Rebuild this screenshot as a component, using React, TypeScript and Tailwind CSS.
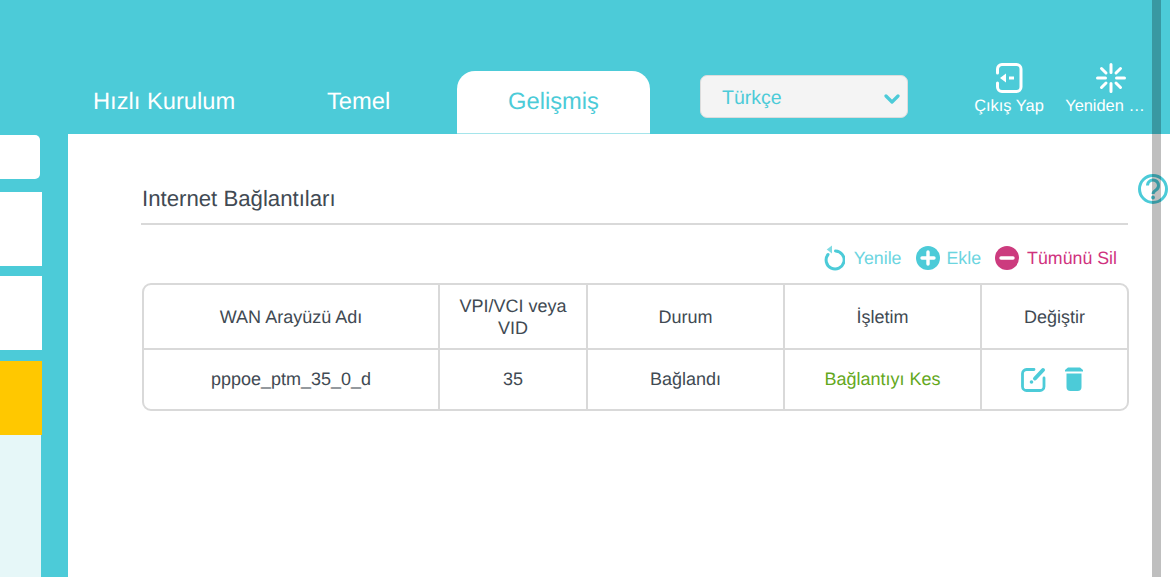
export default function App() {
  return (
    <div className="relative w-[1170px] h-[577px] overflow-hidden bg-white flex flex-col font-['Liberation_Sans',Arial,sans-serif] [text-rendering:geometricPrecision]">
      <header className="h-[134px] shrink-0 bg-[#4ccbd8] flex items-end">
        <nav className="flex items-end w-[650px] h-[63px] text-[23.7px] text-white">
          <div className="w-[327px] h-[62px] flex items-center pl-[93px] pb-[1px]">Hızlı Kurulum</div>
          <div className="w-[130px] h-[62px] flex items-center pb-[1px]">Temel</div>
          <div className="w-[193px] h-[63px] bg-white rounded-t-[18px] text-[#4ccbd8] flex items-center justify-center border-b border-[#a5e5eb] pt-[2px]">Gelişmiş</div>
        </nav>
        <div className="self-start mt-[75px] ml-[50px] w-[208px] h-[43px] rounded-[7px] bg-[#f4f4f4] border border-[#dcdcdc] flex items-center justify-between pl-[21px] pr-[7px] pt-[5px] text-[19.5px] text-[#4ccbd8]">
          <span className="-mt-[1px]">Türkçe</span>
          <svg width="16" height="11" viewBox="0 0 16 11" fill="none" stroke="#4ccbd8" strokeWidth="3.2" strokeLinecap="round" strokeLinejoin="round"><path d="M2 2l6 6 6-6" /></svg>
        </div>
        <div className="self-start mt-[63px] ml-[66px] w-[70px] flex flex-col items-center text-white text-[16.4px] leading-[18px]">
          <svg width="28" height="30" viewBox="0 0 28 30" fill="none" className="mb-[4px]">
            <path d="M2.500 10V6a4.500 4.500 0 0 1 4.500-4.500h14.500a4.500 4.500 0 0 1 4.500 4.500v18a4.500 4.500 0 0 1-4.500 4.500H7a4.500 4.500 0 0 1-4.500-4.500v-4" stroke="#fff" strokeWidth="3" strokeLinecap="round" />
            <path d="M5 15l6-4.500v9z" fill="#fff" />
            <path d="M14 15h5" stroke="#fff" strokeWidth="3" />
          </svg>
          <span className="whitespace-nowrap">Çıkış Yap</span>
        </div>
        <div className="self-start mt-[63px] ml-[21px] w-[80px] flex flex-col items-center text-white text-[16.4px] leading-[18px]">
          <svg width="30" height="30" viewBox="0 0 30 30" fill="none" stroke="#fff" strokeWidth="3" strokeLinecap="round" className="mb-[4px] ml-[11px]">
            <path d="M15 1.500v8M15 20.500v8M1.500 15h8M20.500 15h8M5.500 5.500l4.500 4.500M20 20l4.500 4.500M24.500 5.500 20 10M10 20l-4.500 4.500" />
          </svg>
          <span className="whitespace-nowrap">Yeniden …</span>
        </div>
      </header>

      <div className="flex flex-1 bg-[#4ccbd8]">
        <aside className="w-[68px] shrink-0 flex flex-col">
          <div className="w-[40px] h-[44px] mt-[1px] bg-white rounded-r-[5px]" />
          <div className="w-[42px] h-[74px] mt-[13px] bg-white" />
          <div className="w-[42px] h-[74px] mt-[10px] bg-white" />
          <div className="w-[42px] h-[74px] mt-[11px] bg-[#ffc800]" />
          <div className="w-[41px] flex-1 bg-[#e6f7f8]" />
        </aside>
        <main className="flex-1 bg-white pl-[73px] pr-[42px] text-[#414a53]">
          <h2 className="h-[90px] pt-[52px] pl-[1px] text-[22.2px] leading-[26px] font-normal">Internet Bağlantıları</h2>
          <div className="h-[2px] -mt-[1px] bg-[#d9d9d9] w-[987px]" />
          <div className="h-[58px] w-[987px] flex items-center justify-end pr-[11px] pt-[8px] text-[17.8px]">
            <span className="flex items-center gap-[9px] text-[#6cd5df] mr-[15px]">
              <svg width="21" height="26" viewBox="0 0 21 26" fill="none" className="-mt-[1px]">
                <path d="M11.500 6A9 9 0 1 1 4 9.500" stroke="#4ccbd8" strokeWidth="3" strokeLinecap="round" />
                <path d="M2.700 4.500 8 .500v8z" fill="#7fdbe3" />
              </svg>
              Yenile
            </span>
            <span className="flex items-center gap-[6px] text-[#6cd5df] mr-[14px]">
              <svg width="24" height="24" viewBox="0 0 24 24"><circle cx="12" cy="12" r="12" fill="#4ccbd8" /><path d="M12 6v12M6 12h12" stroke="#fff" strokeWidth="3.400" strokeLinecap="round" /></svg>
              Ekle
            </span>
            <span className="flex items-center gap-[8px] text-[#d0327e]">
              <svg width="24" height="24" viewBox="0 0 24 24"><circle cx="12" cy="12" r="12" fill="#cc3b7e" /><path d="M6 12h12" stroke="#fff" strokeWidth="3.400" strokeLinecap="round" /></svg>
              Tümünü Sil
            </span>
          </div>
          <div className="ml-[1px] w-[987px] h-[128px] border-2 border-[#d9d9d9] rounded-[9px] grid grid-cols-[296px_148px_197px_197px_1fr] grid-rows-[65px_1fr] text-[18px] text-center">
            <div className="flex items-center justify-center border-b-2 border-r-2 border-[#d9d9d9] pt-[2px]">WAN Arayüzü Adı</div>
            <div className="flex items-center justify-center border-b-2 border-r-2 border-[#d9d9d9] leading-[22px] px-4">VPI/VCI veya VID</div>
            <div className="flex items-center justify-center border-b-2 border-r-2 border-[#d9d9d9] pt-[2px]">Durum</div>
            <div className="flex items-center justify-center border-b-2 border-r-2 border-[#d9d9d9] pt-[2px]">İşletim</div>
            <div className="flex items-center justify-center border-b-2 border-[#d9d9d9] pt-[2px]">Değiştir</div>
            <div className="flex items-center justify-center border-r-2 border-[#d9d9d9] pb-[1px]">pppoe_ptm_35_0_d</div>
            <div className="flex items-center justify-center border-r-2 border-[#d9d9d9] pb-[1px]">35</div>
            <div className="flex items-center justify-center border-r-2 border-[#d9d9d9]">Bağlandı</div>
            <div className="flex items-center justify-center border-r-2 border-[#d9d9d9] text-[#64a81c]">Bağlantıyı Kes</div>
            <div className="flex items-center justify-center gap-[18px] pr-[5px] pb-[2px]">
              <svg width="26" height="26" viewBox="0 0 26 26" fill="none">
                <path d="M13 3.500H5.500a4 4 0 0 0-4 4v13a4 4 0 0 0 4 4h13.500a4 4 0 0 0 4-4V12" stroke="#4ccbd8" strokeWidth="2.800" strokeLinecap="round" />
                <path d="M14 12.500l8-8.500" stroke="#4ccbd8" strokeWidth="4" strokeLinecap="round" />
                <circle cx="10.500" cy="16" r="1.800" fill="#4ccbd8" />
              </svg>
              <svg width="18" height="24" viewBox="0 0 18 24">
                <path d="M3 .500h12l3 2.500v1.500H0V3z" fill="#4ccbd8" />
                <path d="M1.500 6.500h15V20a4 4 0 0 1-4 4h-7a4 4 0 0 1-4-4z" fill="#4ccbd8" />
              </svg>
            </div>
          </div>
        </main>
      </div>

      <svg className="absolute left-[1136px] top-[172px]" width="34" height="34" viewBox="0 0 34 34" fill="none">
        <circle cx="17" cy="17" r="13.500" stroke="#4ccbd8" strokeWidth="3" fill="#fff" />
        <path d="M11.500 13.500a5.500 5.500 0 1 1 8.500 4.600c-2 1.300-3 2.200-3 4" stroke="#4ccbd8" strokeWidth="3" />
        <circle cx="17" cy="25.500" r="1.900" fill="#4ccbd8" />
      </svg>
      <div className="absolute top-0 bottom-0 left-[1152px] w-[9px] bg-black/25" />
    </div>
  );
}
